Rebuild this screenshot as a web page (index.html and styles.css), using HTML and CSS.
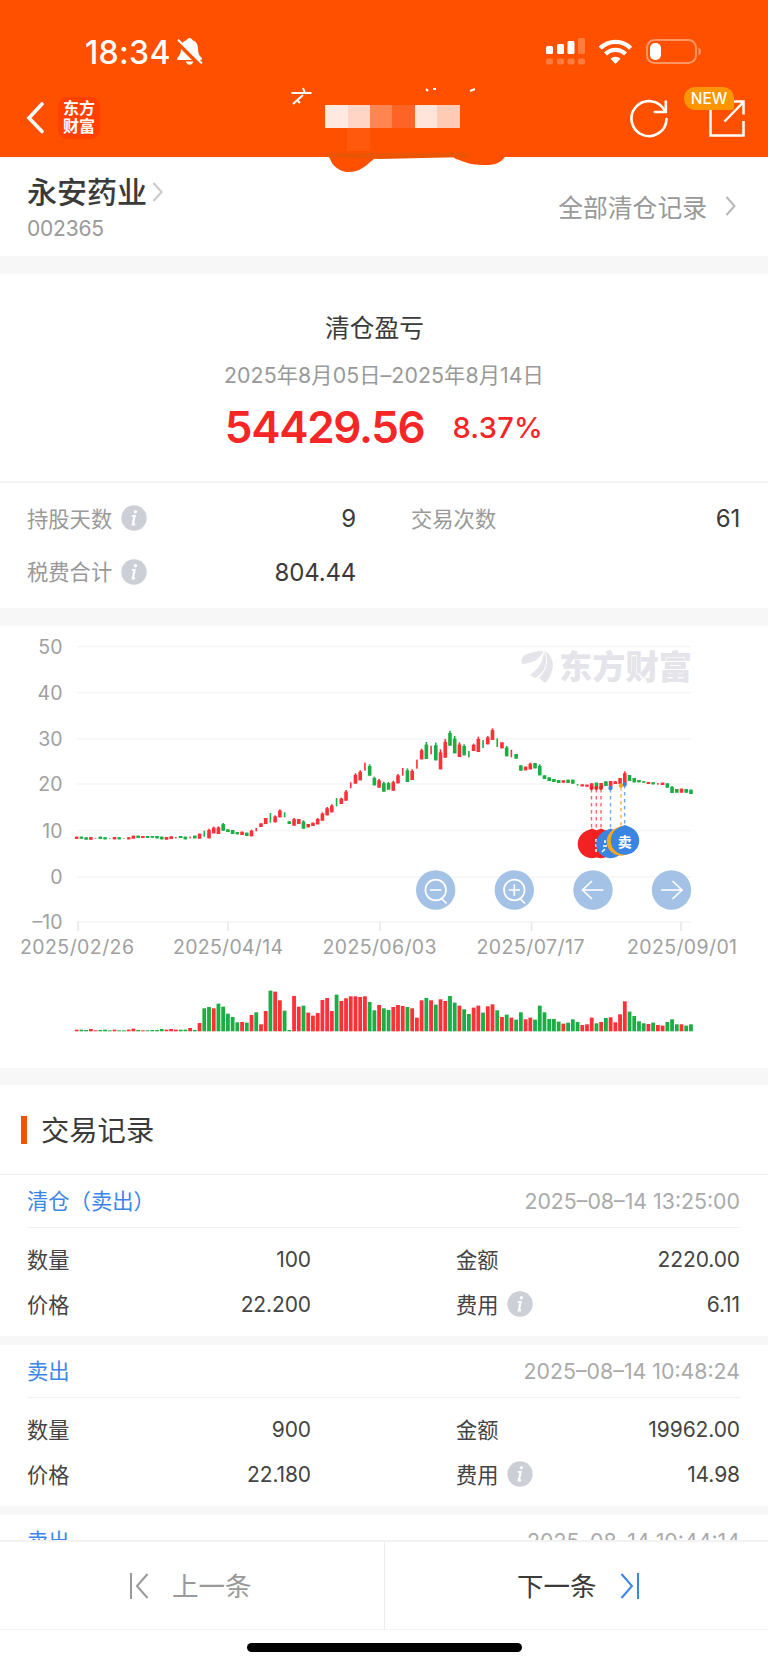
FILE: index.html
```
<!DOCTYPE html>
<html lang="zh-CN">
<head>
    <meta charset="UTF-8">
    <meta name="viewport" content="width=device-width, initial-scale=1.0">
    <title>永安药业 清仓盈亏</title>
    <link rel="stylesheet" href="styles.css">
</head>
<body>
    <svg class="defs" width="0" height="0">
        <symbol id="info" viewBox="0 0 26 26">
            <circle cx="13" cy="13" r="12.7" fill="#cdcfd6"/>
            <circle cx="14.4" cy="6.800" r="1.7" fill="#fff"/>
            <path d="M10.800 11h2.800l-1.800 8.300h2.300" fill="none" stroke="#fff" stroke-width="2.200"/>
        </symbol>
    </svg>

    <header class="header">
        <div class="status">
            <span class="time">18:34</span>
            <svg class="bell" width="26" height="28" viewBox="0 0 26 28">
                <path d="M12.5 0c-1.600 0-2.700 1-3 2.200C5.500 3.500 4 6.500 4 11c0 4-1.200 6.500-3.400 8.500-.8.800-.6 2.500.9 2.500h22c1.500 0 1.700-1.700.9-2.500-2.200-2-3.400-4.500-3.400-8.500 0-4.500-1.500-7.500-5.500-8.800C15.200 1 14.100 0 12.500 0zM8.800 23.500h7.600c-.6 2-2 3.300-3.800 3.300s-3.200-1.300-3.800-3.300z" fill="#fff"/>
                <path d="M-1 2.500L24.500 28" stroke="#ff5000" stroke-width="5"/>
                <path d="M1 1.800L25 25.500" stroke="#fff" stroke-width="2"/>
            </svg>
            <svg class="signals" width="158" height="30" viewBox="0 0 158 30">
                <g fill="#fff">
                    <rect x="1" y="9" width="7" height="8" rx="1.500"/>
                    <rect x="12" y="7" width="7" height="10" rx="1.500"/>
                    <rect x="22.500" y="4" width="7" height="13" rx="1.500"/>
                    <g opacity=".25">
                        <rect x="33" y="1" width="7" height="16" rx="1.500"/>
                        <rect x="1" y="21.500" width="7" height="6" rx="2"/>
                        <rect x="12" y="21.500" width="7" height="6" rx="2"/>
                        <rect x="22.500" y="21.500" width="7" height="6" rx="2"/>
                        <rect x="33" y="21.500" width="7" height="6" rx="2"/>
                    </g>
                    <path d="M70.500 27l-5-5.200a7.200 7.200 0 0 1 10 0z"/>
                </g>
                <g fill="none" stroke="#fff" stroke-width="4.300">
                    <path d="M55.300 11.200a21.500 21.500 0 0 1 30.400 0"/>
                    <path d="M60.500 17a14.200 14.200 0 0 1 20 0"/>
                </g>
                <rect x="102" y="3" width="49" height="23" rx="7.500" fill="none" stroke="#fff" stroke-opacity=".4" stroke-width="2"/>
                <rect x="105" y="6" width="11" height="17" rx="5" fill="#fff"/>
                <path d="M153.500 10.500c3.300 1.500 3.300 6.500 0 8z" fill="#fff" opacity=".4"/>
            </svg>
        </div>
        <div class="nav">
            <svg width="18" height="32" viewBox="0 0 18 32"><path d="M16 2L3 16l13 13.500" fill="none" stroke="#fff" stroke-width="3.600" stroke-linecap="round"/></svg>
            <div class="logo">东方<br>财富</div>
            <div class="nav-space"></div>
            <svg width="40" height="40" viewBox="-0.500 -1 40 40" fill="none" stroke="#fff" stroke-width="2.600" stroke-linecap="round">
                <path d="M34 11.500A17.500 17.500 0 1 0 36 20"/>
                <path d="M35.300 2.500v10.500h-11"/>
            </svg>
            <div class="share">
                <svg width="36" height="37" viewBox="0 0 36 37" fill="none" stroke="#fff" stroke-width="2.500">
                    <path d="M10 1H1.500v34.500H34.500V21"/>
                    <path d="M15.500 21.500L34 2.500M25 1.500h9.500v13"/>
                </svg>
                <span class="badge">NEW</span>
            </div>
        </div>
        <!-- masked account name -->
        <svg class="mask" width="224" height="94" viewBox="285 80 224 94">
            <path d="M328 155h51l-10 8c-11 11-28 13-37 0z" fill="#ff5000"/>
            <path d="M450 155h59l-4 2c-7 8-12 8-22 8-12 0-18-3-27-6z" fill="#ff5000"/>
            <path d="M325 153h143v4l-88 2-54-2z" fill="#ea5504"/>
            <rect x="325" y="105" width="23" height="23" fill="#ffe9e0"/>
            <rect x="348" y="105" width="22" height="23" fill="#ffd5c5"/>
            <rect x="370" y="105" width="22" height="23" fill="#ff8650"/>
            <rect x="392" y="105" width="23" height="23" fill="#ff6426"/>
            <rect x="415" y="105" width="22" height="23" fill="#ffe4da"/>
            <rect x="437" y="105" width="23" height="23" fill="#ffcbb5"/>
            <rect x="347" y="128" width="23" height="23" fill="#ff590d"/>
            <path d="M291.500 93h20M303 88l2 5M303 95l-10 9M298 101l2 2M426 89l2 2M433 89h3M470 91l5-2" fill="none" stroke="#fff" stroke-width="2"/>
        </svg>
    </header>

    <main class="content">
        <section class="stock">
            <div>
                <div class="stock-name">永安药业<svg width="12" height="20" viewBox="0 0 12 20"><path d="M1.500 1l8 9-8 9" fill="none" stroke="#c8c8c8" stroke-width="2"/></svg></div>
                <div class="stock-code">002365</div>
            </div>
            <div class="all-records">全部清仓记录<svg width="12" height="20" viewBox="0 0 12 20"><path d="M1.500 1l8 9-8 9" fill="none" stroke="#b8b8b8" stroke-width="2"/></svg></div>
        </section>

        <section class="profit">
            <h2>清仓盈亏</h2>
            <p class="period">2025年8月05日–2025年8月14日</p>
            <div class="result"><span class="amount">54429.56</span><span class="rate">8.37%</span></div>
        </section>

        <section class="stats">
            <div class="stat"><span>持股天数</span><svg class="info"><use href="#info"/></svg><b>9</b></div>
            <div class="stat"><span>交易次数</span><b>61</b></div>
            <div class="stat"><span>税费合计</span><svg class="info"><use href="#info"/></svg><b>804.44</b></div>
        </section>

        <section class="chart">
            <svg id="chart" width="768" height="442" viewBox="0 626 768 442">
                <g id="grid"></g>
                <g fill="#e4e4ea">
                    <path d="M522 664c-1-4 0-8 3-9 7-3 12-4 18-4-2 8-10 12-21 13zM530 675c8-6 13-12 14-24 5 11 1 22-9 27zM545 683l-6-5c8-8 10-17 6-27 11 7 10 22 0 32z"/>
                    <text x="559" y="679" class="watermark" textLength="133">东方财富</text>
                </g>
                <g id="candles"></g>
                <g id="volumes"></g>
                <g fill="none" stroke-width="1.400" stroke-dasharray="3.500 3.500">
                    <path d="M591.500 789v41M596.300 789v41M601 789v41" stroke="#f66"/>
                    <path d="M610.500 789v41M624.600 785v41" stroke="#6fa8f0"/>
                    <path d="M621 787v41" stroke="#f5b342"/>
                </g>
                <g fill="#f32222"><circle cx="591.500" cy="788" r="2"/><circle cx="596.300" cy="788" r="2"/><circle cx="601" cy="788" r="2"/></g>
                <g fill="#3a84e2"><circle cx="610.500" cy="788" r="2.200"/><circle cx="624.600" cy="784.500" r="2.200"/></g>
                <circle cx="621" cy="785.500" r="2.200" fill="#f5a623"/>
                <g fill="#f32222">
                    <path d="M592 828.500l6 2.500a14.300 14.300 0 1 1-12 0z"/>
                    <path d="M601 828.500l6 2.500a14.300 14.300 0 1 1-12 0z"/>
                </g>
                <path d="M596 839v3M596 844v3M596 849v3" stroke="#fff" stroke-width="1.600"/>
                <path d="M610.500 828.500l6 2.500a14.300 14.300 0 1 1-12 0z" fill="#3a84e2"/>
                <path d="M605 840v3M603 846h4M605 849l-3 3" stroke="#fff" stroke-width="1.500"/>
                <path d="M621 826l6 2.500a14.300 14.300 0 1 1-12 0z" fill="#f5a623"/>
                <path d="M625 825l6 2.500a14.300 14.300 0 1 1-12 0z" fill="#3a84e2"/>
                <text x="624.800" y="847" class="marker">卖</text>
                <g fill="#a4c2e5">
                    <circle cx="435.700" cy="890" r="19.700"/><circle cx="514.300" cy="890" r="19.700"/>
                    <circle cx="593" cy="890" r="19.700"/><circle cx="671.500" cy="890" r="19.700"/>
                </g>
                <g fill="none" stroke="#fff" stroke-width="1.700">
                    <circle cx="435.700" cy="890" r="10.300"/><path d="M430 890h11.400M441 898l5.500 5.500"/>
                    <circle cx="514.300" cy="890" r="10.300"/><path d="M508.600 890h11.400M514.300 884.300v11.400M519.500 898l5.500 5.500"/>
                    <path d="M603.500 890h-21M592 881l-9.500 9 9.500 9"/>
                    <path d="M661 890h21M672.500 881l9.500 9-9.500 9"/>
                </g>
            </svg>
        </section>

        <section class="records">
            <h3><span>交易记录</span></h3>
            <div class="record">
                <div class="record-head"><span>清仓（卖出）</span><time>2025–08–14 13:25:00</time></div>
                <div class="record-body">
                    <div class="cell"><span>数量</span><b>100</b></div>
                    <div class="cell"><span>金额</span><b>2220.00</b></div>
                    <div class="cell"><span>价格</span><b>22.200</b></div>
                    <div class="cell"><span>费用</span><svg class="info"><use href="#info"/></svg><b>6.11</b></div>
                </div>
            </div>
            <div class="record">
                <div class="record-head"><span>卖出</span><time>2025–08–14 10:48:24</time></div>
                <div class="record-body">
                    <div class="cell"><span>数量</span><b>900</b></div>
                    <div class="cell"><span>金额</span><b>19962.00</b></div>
                    <div class="cell"><span>价格</span><b>22.180</b></div>
                    <div class="cell"><span>费用</span><svg class="info"><use href="#info"/></svg><b>14.98</b></div>
                </div>
            </div>
            <div class="record">
                <div class="record-head"><span>卖出</span><time>2025–08–14 10:44:14</time></div>
            </div>
        </section>
    </main>

    <footer class="footer">
        <div class="pager">
            <div class="prev"><svg width="20" height="28" viewBox="0 0 20 28"><path d="M2 1v26M18.500 2L8 14l10.500 12" fill="none" stroke="#999" stroke-width="2"/></svg><span>上一条</span></div>
            <div class="next"><span>下一条</span><svg width="20" height="28" viewBox="0 0 20 28"><path d="M18 1v26M1.500 2L12 14 1.500 26" fill="none" stroke="#3a86e8" stroke-width="2"/></svg></div>
        </div>
        <div class="home-bar"></div>
    </footer>

    <script src="chart.js"></script>
</body>
</html>
```
FILE: styles.css
```
* {
    box-sizing: border-box;
}
body {
    margin: 0;
    height: 1666px;
    display: flex;
    flex-direction: column;
    overflow: hidden;
    background: #fff;
    color: #3a3a3a;
    font-family: Inter, "Noto Sans CJK SC", sans-serif;
}
h2, h3, p {
    margin: 0;
    font-weight: 400;
}
b {
    font-weight: 400;
    margin-left: auto;
}
.defs {
    position: absolute;
}
.header {
    position: relative;
    z-index: 1;
    flex: none;
    height: 157px;
    background: #ff5000;
    color: #fff;
}
.status {
    display: flex;
    align-items: center;
    height: 82px;
    padding: 22px 65px 0 85px;
}
.time {
    width: 92px;
    font-size: 32px;
    font-weight: 500;
    line-height: 36px;
    letter-spacing: 0.3px;
    padding-top: 1px;
}
.signals {
    margin-left: auto;
}
.nav {
    display: flex;
    align-items: center;
    height: 72px;
    padding: 0 23px 0 26px;
}
.logo {
    width: 42px;
    height: 42px;
    margin-left: 14px;
    padding-top: 3px;
    border-radius: 9px;
    background: #ff4000;
    font-size: 16px;
    font-weight: 700;
    line-height: 17.500px;
    text-align: center;
}
.nav-space {
    flex: 1;
}
.share {
    position: relative;
    width: 36px;
    height: 37px;
    margin-left: 39px;
}
.badge {
    position: absolute;
    left: -25px;
    top: -13px;
    width: 50px;
    height: 23px;
    border-radius: 12px 12px 3px 12px;
    background: #ff9500;
    font-size: 15.500px;
    font-weight: 500;
    line-height: 24px;
    text-align: center;
}
.mask {
    position: absolute;
    left: 285px;
    top: 80px;
}
.content {
    flex: 1;
    min-height: 0;
    overflow: hidden;
}
.stock {
    display: flex;
    justify-content: space-between;
    height: 99px;
    padding: 14px 31px 0 27px;
}
.stock-name {
    display: flex;
    align-items: center;
    gap: 5px;
    font-size: 30px;
    font-weight: 500;
    line-height: 42px;
}
.stock-code {
    color: #999;
    font-size: 21px;
    line-height: 31px;
    letter-spacing: -0.2px;
}
.all-records {
    display: flex;
    align-items: center;
    gap: 18px;
    height: 70px;
    color: #999;
    font-size: 24.800px;
}
.profit {
    height: 227px;
    padding-top: 34px;
    border-top: 18px solid #f7f7f7;
    border-bottom: 2px solid #f5f5f5;
    text-align: center;
}
.profit h2 {
    padding-right: 19px;
    font-size: 24.700px;
    line-height: 40px;
}
.period {
    margin-top: 11px;
    color: #999;
    font-size: 21.300px;
    line-height: 32px;
    letter-spacing: 0.080px;
    white-space: nowrap;
}
.result {
    display: flex;
    align-items: center;
    justify-content: center;
    gap: 28px;
    margin-top: 8px;
    color: #f62626;
}
.amount {
    font-size: 44px;
    font-weight: 600;
    line-height: 56px;
    letter-spacing: -1.300px;
}
.rate {
    font-size: 29px;
    font-weight: 500;
    letter-spacing: 0.300px;
}
.stats {
    display: grid;
    grid-template-columns: 329px 329px;
    grid-auto-rows: 53.500px;
    column-gap: 55px;
    height: 125px;
    padding: 9px 0 0 27px;
}
.stat, .cell {
    display: flex;
    align-items: center;
    color: #999;
    font-size: 21.300px;
}
.stat span, .cell span, .record-head span, .records h3 span, .pager span {
    padding-bottom: 3px;
}
.stat b {
    color: #3a3a3a;
    font-size: 24px;
    letter-spacing: -0.200px;
}
.info {
    width: 26px;
    height: 26px;
    margin-left: 9px;
}
.stats .info, .cell .info {
    margin-bottom: 1px;
}
.chart {
    height: 460px;
    border-top: 18px solid #f7f7f7;
}
.chart svg {
    display: block;
}
.axis {
    fill: #a0a0a0;
    font-size: 19.500px;
}
.watermark {
    font-size: 33.200px;
    font-weight: 900;
}
.marker {
    fill: #fff;
    font-size: 14px;
    font-weight: 700;
    text-anchor: middle;
}
.records {
    border-top: 17px solid #f7f7f7;
}
.records h3 {
    display: flex;
    align-items: center;
    gap: 14px;
    height: 90px;
    padding-left: 21px;
    border-bottom: 1px solid #f2f2f2;
    font-size: 28.300px;
}
.records h3::before {
    content: "";
    width: 6px;
    height: 28px;
    background: #f25500;
}
.record {
    height: 170px;
    padding: 0 28px 0 27px;
    border-bottom: 9px solid #f7f7f7;
}
.record-head {
    display: flex;
    align-items: center;
    justify-content: space-between;
    height: 53px;
    border-bottom: 1px solid #f2f2f2;
    color: #3a86e8;
    font-size: 21.300px;
}
.record-head time {
    color: #aaa;
}
.record-body {
    display: grid;
    grid-template-columns: 284px 284px;
    grid-auto-rows: 45px;
    column-gap: 145px;
    padding-top: 9px;
}
.cell {
    color: #444;
    font-size: 21.200px;
}
.cell b {
    font-size: 21px;
    letter-spacing: -0.100px;
}
.footer {
    flex: none;
    height: 126px;
    background: #fff;
}
.pager {
    display: flex;
    height: 90px;
    border-top: 2px solid #f2f2f2;
    border-bottom: 1px solid #f2f2f2;
    font-size: 26.500px;
}
.prev, .next {
    display: flex;
    align-items: center;
    gap: 23px;
}
.prev {
    width: 384px;
    padding-left: 129px;
    color: #999;
}
.next {
    flex: 1;
    padding-left: 132px;
    border-left: 1px solid #ececec;
}
.home-bar {
    width: 275px;
    height: 9px;
    margin: 13px auto 0;
    border-radius: 5px;
    background: #000;
}
```
FILE: chart.js
```
const RED = '#ff3037';
const GREEN = '#1aae44';
const FIRST_X = 76.7;
const STEP = 4.725;
const TOP = 620;
const VOLUME_BASE = 1031.3;

// high-low offsets in thirds of a pixel, "n" marks a candle without a body
const prices = `650-657 650-656 652-659 651-659 654-656n 650-657 652-658 655-657n 651-658 652-658
654-656n 652-658 647-656 647-654 648-654 648-654 648-653 648-655 650-658 651-659
649-657 651-655n 648-654 650-658 650-655n 647-655 641-656 632-650n 626-655 620-640
619-642 609-632 628-636 630-642 636-643 635-645 638-648 629-649 624-634n 610-621
594-612 579-608n 586-607 568-592 577-592n 604-612 594-617 597-612 601-626 612-622
608-618 594-613 577-602 561-586 553-577 534-559n 533-552 510-542 487-505n 460-491
451-481 428-452n 433-467 470-496 477-503 485-515 486-509 482-512 462-490 444-467n
445-486 448-480 419-446n 386-418 366-417 377-403n 368-421 388-448 357-413 332-377
348-400 367-411 373-406 393-412n 371-393 350-396 360-384n 348-373 325-360 355-381n
367-385 378-409 389-412n 402-416 436-452 440-451 428-448 429-445 433-466 466-477
472-483 477-486 480-489 481-488 479-489 479-491 492-497n 493-499 494-500 490-503
488-503 489-503 484-498 483-500 484-492 474-492 454-492 465-483 474-487 480-487
484-488 486-492 487-493 489-494n 488-495 490-503 498-519 507-518 506-518 507-518 509-522`.split(/\s+/);

const volumes = `5r 5g 4g 7r 3r 4g 5g 3g 5r 3g 3g 5r 8r 4g 3r 3g 4g 4g 7g 5r 7r 5r 5g 5g 10r 4g 25r 69g 73g 69r
83g 74g 53g 43g 27g 28r 26g 49r 57g 21r 61r 122g 119r 93r 62g 4g 106r 74r 77g 56r 47r 55r 94r 100r 61r 110g
91r 99r 105r 105r 103r 105r 88g 63g 79r 69g 64g 73r 79r 76r 73g 69r 41r 93r 100g 93r 80g 96r 91r 106g
86g 77r 66g 52g 71r 77r 56g 75r 81r 63g 43r 50g 41r 35g 57g 36r 41r 35g 77g 57g 37g 37g 29g 23r 26g 36g
28g 19r 21r 41r 24g 28r 40g 42r 27r 51r 90r 59g 46g 30g 24g 22r 26g 19r 17r 28g 36g 21g 21r 17g 21g`.split(/\s+/);

// candle colours where they differ from the volume bar
const candleColors = { 28: RED, 30: RED, 38: RED, 40: RED, 41: GREEN, 55: GREEN, 70: GREEN };

function add(parent, name, attrs, text) {
    const el = document.createElementNS('http://www.w3.org/2000/svg', name);
    for (const key in attrs) {
        el.setAttribute(key, attrs[key]);
    }
    if (text) {
        el.textContent = text;
    }
    parent.appendChild(el);
}

function drawGrid() {
    const grid = document.getElementById('grid');
    const rows = [[50, 646.5], [40, 692.5], [30, 739], [20, 784], [10, 830.5], [0, 877], [-10, 922]];
    rows.forEach(([value, y]) => {
        add(grid, 'path', { d: `M77 ${y}H691`, stroke: '#f4f4f5', 'stroke-width': 1.5 });
        const label = String(value).replace('-', '–');
        add(grid, 'text', { x: 62.5, y: y + 7, class: 'axis', 'text-anchor': 'end' }, label);
    });
    const dates = [['2025/02/26', 78, 20, 114], ['2025/04/14', 228, 173, 110], ['2025/06/03', 380, 322.5, 114],
        ['2025/07/17', 531.5, 476.5, 108], ['2025/09/01', 681, 627, 110]];
    dates.forEach(([date, tick, x, width]) => {
        add(grid, 'path', { d: `M${tick} 922v9`, stroke: '#e6e6e8', 'stroke-width': 1.5 });
        add(grid, 'text', { x: x, y: 953.5, class: 'axis', textLength: width }, date);
    });
}

function drawCandles() {
    const candles = document.getElementById('candles');
    prices.forEach((range, i) => {
        const [high, low] = range.split('-').map(v => TOP + parseInt(v) / 3);
        const x = FIRST_X + i * STEP;
        const color = candleColors[i] || (volumes[i].endsWith('r') ? RED : GREEN);
        const height = low - high;
        add(candles, 'rect', { x: x - 0.8, y: high, width: 1.6, height: height, fill: color });
        if (!range.endsWith('n')) {
            const inset = height > 6 ? height * 0.15 : 0;
            add(candles, 'rect', { x: x - 1.8, y: high + inset, width: 3.6, height: height - inset, fill: color });
        }
    });
}

function drawVolumes() {
    const group = document.getElementById('volumes');
    volumes.forEach((item, i) => {
        const height = parseInt(item) / 3;
        add(group, 'rect', {
            x: FIRST_X + i * STEP - 1.9,
            y: VOLUME_BASE - height,
            width: 3.8,
            height: height,
            fill: item.endsWith('r') ? RED : GREEN
        });
    });
}

drawGrid();
drawCandles();
drawVolumes();
```
